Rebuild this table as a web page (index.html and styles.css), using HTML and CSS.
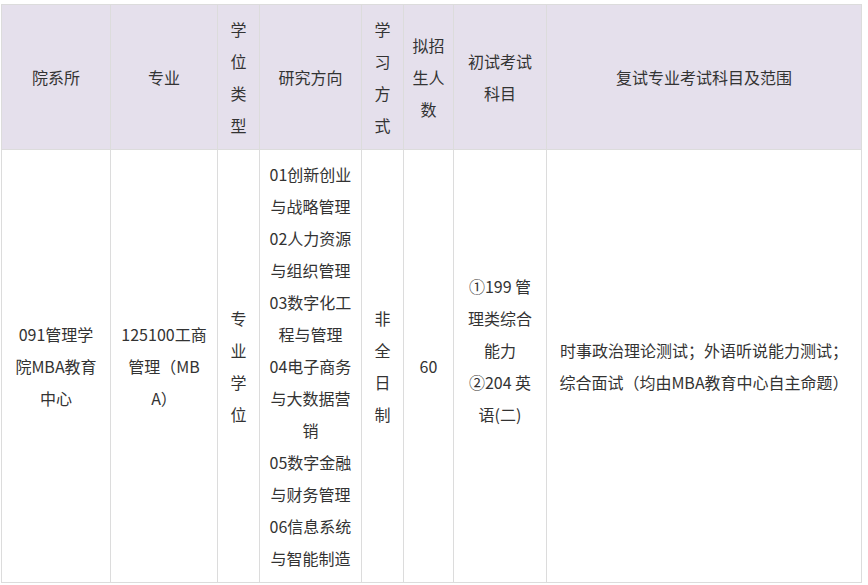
FILE: index.html
```html
<!DOCTYPE html>
<html lang="zh-CN">
<head>
<meta charset="utf-8">
<title>招生目录</title>
<link rel="stylesheet" href="styles.css">
</head>
<body>
<table class="plan">
  <colgroup>
    <col class="c-dept">
    <col class="c-major">
    <col class="c-type">
    <col class="c-dir">
    <col class="c-mode">
    <col class="c-num">
    <col class="c-exam">
    <col class="c-retest">
  </colgroup>
  <thead>
    <tr>
      <th>院系所</th>
      <th>专业</th>
      <th>学位类型</th>
      <th>研究方向</th>
      <th>学习方式</th>
      <th class="narrow">拟招生人数</th>
      <th>初试考试科目</th>
      <th>复试专业考试科目及范围</th>
    </tr>
  </thead>
  <tbody>
    <tr>
      <td>091管理学院MBA教育中心</td>
      <td>125100工商管理（MBA）</td>
      <td>专业学位</td>
      <td>01创新创业与战略管理<br>02人力资源与组织管理<br>03数字化工程与管理<br>04电子商务与大数据营销<br>05数字金融与财务管理<br>06信息系统与智能制造</td>
      <td>非全日制</td>
      <td class="narrow">60</td>
      <td>①199 管理类综合能力<br>②204 英语(二)<br><br></td>
      <td>时事政治理论测试；外语听说能力测试；综合面试（均由MBA教育中心自主命题）</td>
    </tr>
  </tbody>
</table>
</body>
</html>
```

FILE: styles.css
```css
html, body {
  margin: 0;
  padding: 0;
  background: #ffffff;
}

body {
  padding: 4px 0 0 1px;
  font-family: "Noto Sans CJK SC", "Noto Sans", sans-serif;
  font-size: 16px;
  color: #333333;
}

.plan {
  border-collapse: collapse;
  table-layout: fixed;
  width: 860px;
}

.c-dept { width: 109px; }
.c-major { width: 107px; }
.c-type { width: 42px; }
.c-dir { width: 102px; }
.c-mode { width: 42px; }
.c-num { width: 50px; }
.c-exam { width: 93px; }
.c-retest { width: 315px; }

.plan th,
.plan td {
  border: 1px solid #dcdcdc;
  padding: 8px 9px;
  line-height: 32px;
  text-align: center;
  vertical-align: middle;
  font-weight: normal;
  word-break: break-all;
}

.plan .narrow {
  padding-left: 4px;
  padding-right: 4px;
}

.plan th {
  background: #e5e0ec;
}
```
